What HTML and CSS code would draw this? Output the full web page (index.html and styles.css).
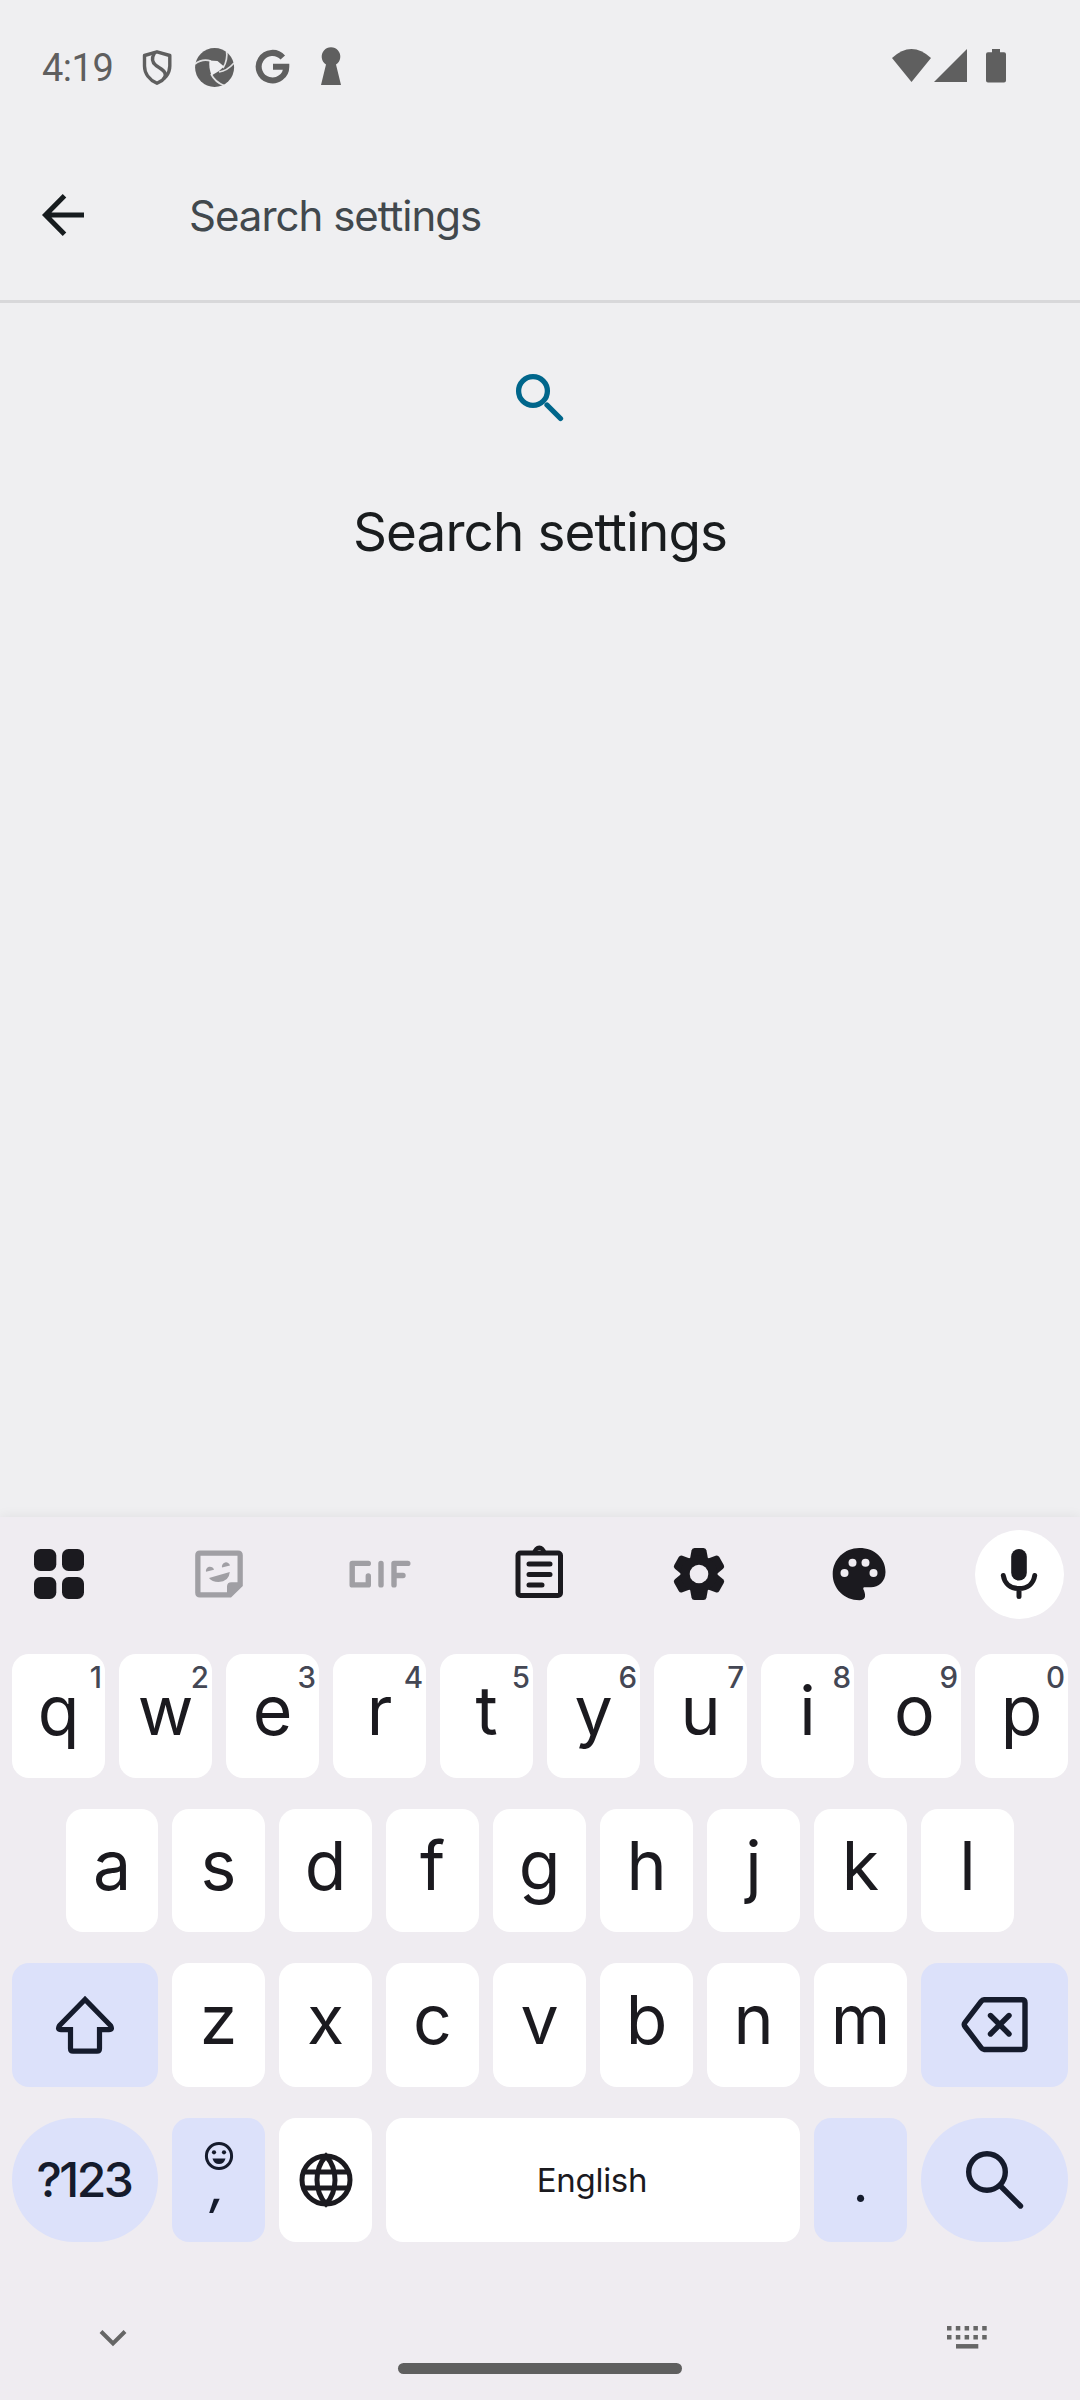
FILE: index.html
```html
<!DOCTYPE html>
<html lang="en">
<head>
<meta charset="utf-8">
<title>Search settings</title>
<link rel="stylesheet" href="styles.css">
</head>
<body>
<div class="screen">
  <header class="status">
    <span class="clock">4:19</span>
    <svg class="status-left" viewBox="130 40 220 54" width="220" height="54">
      <g fill="none" stroke="#5f5f5f" stroke-width="3.4" stroke-linejoin="round">
        <path d="M157 51.8L144.500 55.500V66C144.500 73.500 149.500 80 157 83.300C164.500 80 169.800 73.500 169.800 66V55.500Z"/>
        <path d="M154.500 53C151.500 58 151.500 62 156 65.500C162.500 69.500 168.500 73 163.500 79"/>
      </g>
      <ellipse cx="214.600" cy="67.500" rx="19.500" ry="19.500" fill="#5f5f5f"/>
      <path d="M209.500 60.500L217.500 61L224 66.500L219 71L211.500 75.500Q208.500 67 209.500 60.500Z" fill="#efeff1"/>
      <g fill="none" stroke="#efeff1" stroke-width="1.700">
        <path d="M195 64Q202 58.500 211 61M223 68Q228 60 226.500 50M211 74Q215 82 224 85.500M219 72Q227 71 234 63" stroke-opacity=".9"/>
      </g>
      <path d="M282.800 57.500A13.800 13.800 0 1 0 286.300 66.700H273" fill="none" stroke="#5f5f5f" stroke-width="6"/>
      <path d="M326 64.500A9.300 9.300 0 1 1 336 64.500L341 85H321Z" fill="#5f5f5f"/>
    </svg>
    <svg class="status-right" viewBox="890 46 118 40" width="118" height="40" fill="#5f5f5f">
      <path d="M892 58Q911.500 40 931 58L911.500 82Z"/>
      <path d="M967 49V82H934Z"/>
      <path d="M992 49H1000V52.300H1004Q1006 52.300 1006 54.300V80.500Q1006 82.600 1004 82.600H988Q986 82.600 986 80.500V54.300Q986 52.300 988 52.300H992Z"/>
    </svg>
  </header>
  <div class="searchbar">
    <svg viewBox="0 0 42 42" width="42" height="42" fill="none" stroke="#171c1f" stroke-width="5"><path d="M42 21H4M22.500 1.800L3.500 21L22.500 40.200"/></svg>
    <span class="query">Search settings</span>
  </div>
  <main class="empty">
    <svg viewBox="0 0 48 48" width="48" height="48" fill="none" stroke="#00668b" stroke-width="5.300"><circle cx="17" cy="17" r="14.400"/><path stroke-linecap="round" d="M31 31L44.500 44.500"/></svg>
    <h1 class="title">Search settings</h1>
  </main>
  <section class="keyboard">
    <div class="toolbar">
      <svg viewBox="0 0 54 54" width="54" height="54" fill="#1b1a1f"><rect x="2" y="2" width="22.300" height="22" rx="6.500"/><rect x="30" y="2" width="22" height="22" rx="6.500"/><rect x="2" y="30" width="22.300" height="22" rx="6.500"/><rect x="30" y="30" width="22" height="22" rx="6.500"/></svg>
      <svg viewBox="0 0 54 54" width="54" height="54" fill="#a09fa4"><path fill-rule="evenodd" d="M8 3.500H46Q50.800 3.500 50.800 8.300V39L39 50.500H8Q3.200 50.500 3.200 45.700V8.300Q3.200 3.500 8 3.500ZM8.500 8.700V45.300H35V39.500Q35 35.200 39.500 35.200H45.500V8.700Z"/><path d="M14 24.800A4 4 0 1 1 22 22.800ZM30 20.500A4 4 0 1 1 38 18.500ZM17 31L37.800 25Q37 34.800 26.500 35Q20 35 17 31Z"/></svg>
      <svg viewBox="0 0 64 54" width="64" height="54" fill="none" stroke="#a09fa4" stroke-width="5.400" stroke-linecap="round" stroke-linejoin="round"><path d="M21.300 16.400H5.200V37.900H21.300V29M34 16.400V37.900M47 37.900V16.400H60.800M47 28.500H56"/></svg>
      <svg viewBox="0 0 54 54" width="54" height="54" fill="none" stroke="#1b1a1f" stroke-width="5"><rect x="6" y="6" width="42.500" height="42.500" rx="2.500"/><path stroke="none" fill="#1b1a1f" fill-rule="evenodd" d="M20 6Q22 -1.500 27.300 -1.500T34.600 6V8H20ZM27.300 2.900A2.100 2.100 0 1 0 27.300 7.100A2.100 2.100 0 1 0 27.300 2.900Z"/><path stroke-linecap="round" d="M17 17H38M17 27.500H38M17 38H30"/></svg>
      <svg viewBox="0 0 54 54" width="54" height="54"><g fill="#1b1a1f"><path id="tooth" d="M22.500 1H31.500Q34 1 34.500 3.500L36 12L18 12L19.500 3.500Q20 1 22.500 1Z"/><use href="#tooth" transform="rotate(60 27 27)"/><use href="#tooth" transform="rotate(120 27 27)"/><use href="#tooth" transform="rotate(180 27 27)"/><use href="#tooth" transform="rotate(240 27 27)"/><use href="#tooth" transform="rotate(300 27 27)"/><circle cx="27" cy="27" r="18.500"/></g><circle cx="27" cy="27" r="9.300" fill="#efecf1"/></svg>
      <svg viewBox="0 0 54 54" width="54" height="54"><path fill="#1b1a1f" d="M27.300 1C43 1 53.500 11.500 53.500 25C53.500 34.500 46.500 40.200 39 40.200H32Q30.500 41 32 43.500Q35.500 53.200 27.500 53.200C12 53.200 .7 41.500 .7 27.200C.7 12.500 12.500 1 27.300 1Z"/><g fill="#efecf1"><circle cx="12.500" cy="26" r="4"/><circle cx="20.500" cy="15.700" r="4"/><circle cx="33.500" cy="15.700" r="4"/><circle cx="41.500" cy="26" r="4"/></g></svg>
      <span class="mic"><svg viewBox="0 0 40 52" width="40" height="52" fill="none" stroke="#1b1a1f" stroke-width="5" stroke-linecap="round"><rect x="12.200" y="1" width="15.600" height="31.500" rx="7.800" fill="#1b1a1f" stroke="none"/><path d="M4.300 27.500C5.500 35.500 11.500 40.500 20 40.500S34.500 35.500 35.700 27.500M20 40.500V48.500"/></svg></span>
    </div>
    <div class="row">
      <div class="key">q<sup>1</sup></div><div class="key">w<sup>2</sup></div><div class="key">e<sup>3</sup></div><div class="key">r<sup>4</sup></div><div class="key">t<sup>5</sup></div><div class="key">y<sup>6</sup></div><div class="key">u<sup>7</sup></div><div class="key">i<sup>8</sup></div><div class="key">o<sup>9</sup></div><div class="key">p<sup>0</sup></div>
    </div>
    <div class="row row-home">
      <div class="key">a</div><div class="key">s</div><div class="key">d</div><div class="key">f</div><div class="key">g</div><div class="key">h</div><div class="key">j</div><div class="key">k</div><div class="key">l</div>
    </div>
    <div class="row">
      <div class="key wide tint"><svg viewBox="0 0 60 60" width="60" height="60" fill="none" stroke="#151b2c" stroke-width="5.200" stroke-linejoin="miter"><path d="M30 4.500L4.500 30.500Q2 34.700 6 34.700H15.500V53.500Q15.500 56.200 18 56.200H42Q44.500 56.200 44.500 53.500V34.700H54Q58 34.700 55.500 30.500Z"/></svg></div>
      <div class="key">z</div><div class="key">x</div><div class="key">c</div><div class="key">v</div><div class="key">b</div><div class="key">n</div><div class="key">m</div>
      <div class="key wide tint last"><svg viewBox="0 0 70 60" width="70" height="60" fill="none" stroke="#151b2c" stroke-width="5.400" stroke-linejoin="round" stroke-linecap="round"><path d="M24 4.700H62Q65 4.700 65 7.700V51.500Q65 54.500 62 54.500H24Q22.500 54.500 21 52.500L5 31.500Q3.500 29.500 5 27.500L21 6.700Q22.500 4.700 24 4.700ZM30.500 20.500L49 39M49 20.500L30.500 39"/></svg></div>
    </div>
    <div class="row">
      <div class="key wide tint pill symbols">?123</div>
      <div class="key tint comma"><svg viewBox="0 0 30 30" width="30" height="30"><circle cx="15" cy="15" r="12.600" fill="none" stroke="#151b2c" stroke-width="3"/><g fill="#151b2c"><circle cx="10" cy="11.300" r="2.100"/><circle cx="20" cy="11.300" r="2.100"/><path d="M8.500 17.500H21.500Q20 23 15 23T8.500 17.500Z"/></g></svg><span>,</span></div>
      <div class="key"><svg viewBox="0 0 54 54" width="54" height="54" fill="none" stroke="#1b1a1f" stroke-width="5"><circle cx="27" cy="27" r="24"/><path d="M5 19H49M5 35H49M27 3C15 16 15 38 27 51C39 38 39 16 27 3Z"/></svg></div>
      <div class="key space">English</div>
      <div class="key tint period">.</div>
      <div class="key wide tint pill last"><svg viewBox="0 0 60 60" width="60" height="60" fill="none" stroke="#151b2c" stroke-width="5.400" stroke-linecap="round"><circle cx="22" cy="22" r="18.300"/><path d="M35.500 36L55.500 56"/></svg></div>
    </div>
    <footer class="nav">
      <svg viewBox="0 0 28 18" width="28" height="18" fill="none" stroke="#666" stroke-width="4"><path d="M2 2.500L14 14.500L26 2.500"/></svg>
      <span class="handle"></span>
      <svg viewBox="0 0 42 24" width="42" height="24" fill="none" stroke="#666" stroke-width="4.500"><path stroke-dasharray="4.500 4.300" d="M1 3.300H42M1 12.300H42"/><path d="M10 21.300H32.300"/></svg>
    </footer>
  </section>
</div>
</body>
</html>
```
FILE: styles.css
```css
* { box-sizing: border-box; }
body { margin: 0; background: #efeff1; font-family: Inter, "Liberation Sans", sans-serif; }
svg { display: block; flex: none; overflow: visible; }
.screen { width: 1080px; height: 2400px; display: flex; flex-direction: column; overflow: hidden; }
.status { height: 130px; padding: 40px 72px 0 42px; display: flex; align-items: flex-start; }
.clock { width: 88px; padding-top: 1px; font: 38px/54px Roboto, sans-serif; letter-spacing: -.5px; color: #5f5f5f; }
.status-right { margin: 6px 0 0 auto; }
.searchbar { height: 173px; border-bottom: 3px solid #d8d8da; display: flex; align-items: center; padding: 0 42px; gap: 105px; }
.query { font-size: 42px; letter-spacing: -1px; color: #41484d; }
.empty { flex: 1; display: flex; flex-direction: column; align-items: center; padding-top: 71px; }
.title { margin: 75px 0 0; font-size: 53px; line-height: 70px; font-weight: 400; letter-spacing: -.9px; color: #191c1e; }
.keyboard { height: 883px; background: #efecf1; padding: 0 12px; display: flex; flex-direction: column; box-shadow: 0 0 12px rgba(0, 0, 0, .07); color: #1b1a1f; }
.toolbar { height: 137px; margin: 0 -33px; padding: 13px 0 35px; display: grid; grid-template-columns: repeat(7, 160px); justify-items: center; align-items: center; }
.toolbar > svg { margin-top: -1px; }
.mic { width: 89px; height: 89px; border-radius: 50%; background: #fff; display: flex; align-items: center; justify-content: center; }
.mic svg { margin-top: -1px; }
.row { display: flex; gap: 14px; margin-bottom: 31px; height: 123.700px; flex: none; }
.row-home { padding-left: 54px; }
.row-home .key:first-child { width: 92px; }
.key { position: relative; flex: none; width: 93px; height: 100%; border-radius: 17px; background: #fff; display: flex; align-items: center; justify-content: center; font-size: 68px; padding-bottom: 12px; }
.key:has(> svg) { padding-bottom: 0; }
.key sup { position: absolute; top: 8px; right: 3px; font-size: 29.500px; line-height: 30px; font-weight: 500; color: #444754; }
.wide { width: 146px; }
.wide.last { width: 147px; }
.tint { background: #dce1fa; color: #151b2c; }
.pill { border-radius: 62px; }
.key.symbols { font-size: 48px; font-weight: 500; letter-spacing: -2.500px; padding: 0 2px 0 0; }
.comma { flex-direction: column; justify-content: flex-start; padding-top: 23px; }
.comma span { font-size: 50px; line-height: 50px; font-weight: 500; margin-top: -10px; transform: skewX(-10deg); }
.key.space { width: 414px; font-size: 33px; padding: 0 2px 0 0; letter-spacing: -.3px; }
.key.period { font-size: 50px; font-weight: 500; padding: 8px 0 0 0; }
.nav { flex: 1; display: grid; grid-template-columns: 299px 284px 1fr; padding: 56px 80px 0 87px; }
.nav svg:last-child { justify-self: end; margin-top: -4px; }
.handle { height: 11px; border-radius: 6px; background: #5f5f5f; margin-top: 34px; }
```
